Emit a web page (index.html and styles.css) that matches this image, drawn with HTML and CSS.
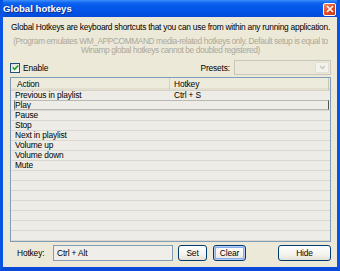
FILE: index.html
```html
<!DOCTYPE html>
<html lang="en">
<head>
  <meta charset="UTF-8">
  <title>Global hotkeys</title>
  <link rel="stylesheet" href="styles.css">
</head>
<body>
<div class="window">
  <div class="titlebar">
    <span class="title">Global hotkeys</span>
    <span class="close-btn">
      <svg width="8" height="8" viewBox="0 0 8 8"><path d="M1 1 L7 7 M7 1 L1 7" stroke="#fff" stroke-width="1.6"/></svg>
    </span>
  </div>

  <div class="content">
    <div class="intro">Global Hotkeys are keyboard shortcuts that you can use from within any running application.</div>
    <div class="note">(Program emulates WM_APPCOMMAND media-related hotkeys only. Default setup is equal to<br>Winamp global hotkeys cannot be doubled registered)</div>

    <div class="options">
      <label class="check">
        <span class="check-box">
          <svg width="7" height="7" viewBox="0 0 7 7"><path d="M0.8 3.4 L2.7 5.3 L6.2 1.5" fill="none" stroke="#21a121" stroke-width="1.6"/></svg>
        </span>
        Enable
      </label>
      <span class="presets-label">Presets:</span>
      <div class="combo">
        <span class="combo-btn">
          <svg width="7" height="5" viewBox="0 0 7 5"><path d="M1 1 L3.5 3.5 L6 1" fill="none" stroke="#c9c7ba" stroke-width="1.3"/></svg>
        </span>
      </div>
    </div>

    <div class="list">
      <div class="list-head">
        <span class="col-action">Action</span>
        <span class="col-key">Hotkey</span>
        <span class="col-rest"></span>
      </div>
      <div class="row"><span class="col-action">Previous in playlist</span><span class="col-key">Ctrl + S</span></div>
      <div class="row focused"><span class="col-action">Play</span><span class="col-key"></span></div>
      <div class="row"><span class="col-action">Pause</span><span class="col-key"></span></div>
      <div class="row"><span class="col-action">Stop</span><span class="col-key"></span></div>
      <div class="row"><span class="col-action">Next in playlist</span><span class="col-key"></span></div>
      <div class="row"><span class="col-action">Volume up</span><span class="col-key"></span></div>
      <div class="row"><span class="col-action">Volume down</span><span class="col-key"></span></div>
      <div class="row"><span class="col-action">Mute</span><span class="col-key"></span></div>
      <div class="row"></div>
      <div class="row"></div>
      <div class="row"></div>
      <div class="row"></div>
      <div class="row"></div>
      <div class="row"></div>
      <div class="row"></div>
    </div>

    <div class="bottom">
      <span class="hotkey-label">Hotkey:</span>
      <div class="hotkey-edit">Ctrl + Alt</div>
      <button class="btn btn-set">Set</button>
      <button class="btn btn-clear default">Clear</button>
      <button class="btn btn-hide">Hide</button>
    </div>
  </div>
</div>
</body>
</html>
```

FILE: styles.css
```css
body {
  margin: 0;
  font-family: 'Liberation Sans', Arial, sans-serif;
  font-size: 8.4px;
  letter-spacing: -0.15px;
  color: #000;
}
.window {
  width: 340px;
  height: 271px;
  box-sizing: border-box;
  background: #ece9d8;
  border-left: 3px solid #0a54e4;
  border-right: 3px solid #0a54e4;
  border-bottom: 4px solid #0a4ad8;
  display: flex;
  flex-direction: column;
  overflow: hidden;
}
.titlebar {
  height: 17px;
  flex: none;
  margin: 0 -3px;
  padding: 0 4px 0 3px;
  display: flex;
  align-items: center;
  justify-content: space-between;
  background: linear-gradient(#3b8ffa 0, #0d62f0 18%, #0357e8 45%, #0152e4 80%, #0648d4 100%);
}
.title {
  color: #fff;
  font-weight: bold;
  font-size: 9.6px;
  letter-spacing: 0;
  text-shadow: 1px 1px 0 #0f2a8c;
}
.close-btn {
  width: 11px;
  height: 11px;
  border: 1px solid #fff;
  border-radius: 2px;
  background: linear-gradient(135deg, #f08b6a, #e0471f 55%, #c73a16);
  display: flex;
  align-items: center;
  justify-content: center;
  margin-top: 1px;
}
.content {
  flex: 1;
  padding: 4px 6px 0 7px;
  display: flex;
  flex-direction: column;
}
.intro {
  text-align: center;
  line-height: 12px;
  white-space: nowrap;
  letter-spacing: -0.25px;
}
.note {
  margin-top: 4px;
  text-align: center;
  line-height: 9px;
  color: #aca899;
  white-space: nowrap;
  letter-spacing: -0.42px;
}
.options {
  margin-top: 5px;
  height: 15px;
  flex: none;
  display: flex;
  align-items: center;
}
.check {
  display: flex;
  align-items: center;
  gap: 3px;
}
.check-box {
  width: 8px;
  height: 8px;
  border: 1px solid #1c5180;
  background: linear-gradient(135deg, #dcdcd7, #fff);
  display: flex;
  align-items: center;
  justify-content: center;
}
.presets-label {
  margin-left: auto;
  margin-right: 4px;
}
.combo {
  width: 97px;
  height: 15px;
  box-sizing: border-box;
  border: 1px solid #c9c7ba;
  background: #ebe8da;
  display: flex;
  justify-content: flex-end;
}
.combo-btn {
  width: 12px;
  margin: 1px;
  border-radius: 1px;
  background: #f3f2ec;
  border: 1px solid #e2e0d4;
  display: flex;
  align-items: center;
  justify-content: center;
}
.list {
  margin-top: 2px;
  height: 165px;
  flex: none;
  box-sizing: border-box;
  border: 1px solid #7f9db9;
  background: #edece6;
  overflow: hidden;
}
.list-head {
  height: 13px;
  box-sizing: border-box;
  display: flex;
  background: #ecebdc;
  border-bottom: 1px solid #d6d3c3;
  box-shadow: inset 0 -2px 0 #e2dfd1;
  line-height: 12px;
}
.list-head .col-action {
  padding-left: 6px;
  border-right: 1px solid #d6d3c3;
}
.list-head .col-key {
  padding-left: 4px;
  border-right: 1px solid #c7c4b5;
}
.col-action {
  width: 159px;
  padding-left: 4px;
  box-sizing: border-box;
}
.col-key {
  width: 159px;
  padding-left: 4px;
  box-sizing: border-box;
}
.row {
  height: 10px;
  box-sizing: border-box;
  display: flex;
  line-height: 9px;
  border-bottom: 1px solid #d9d7cf;
  position: relative;
}
.row.focused::after {
  content: "";
  position: absolute;
  left: 3px;
  right: 1px;
  top: -1px;
  bottom: 0;
  border: 1px solid #b9b8b2;
  border-left-color: #6d6c68;
  border-right-color: #555450;
}
.bottom {
  margin-top: 3px;
  height: 16px;
  flex: none;
  display: flex;
  align-items: center;
}
.hotkey-label {
  margin-left: 7px;
  width: 36px;
}
.hotkey-edit {
  width: 120px;
  height: 16px;
  box-sizing: border-box;
  border: 1px solid #7f9db9;
  background: #efeee9;
  padding-left: 3px;
  line-height: 14px;
}
.btn {
  height: 16px;
  box-sizing: border-box;
  border: 1px solid #003c74;
  border-radius: 3px;
  background: linear-gradient(#ffffff, #f4f3ee 60%, #e3e1d6);
  font-family: inherit;
  font-size: 8.4px;
  letter-spacing: -0.15px;
  padding: 0;
  color: #000;
}
.btn-set {
  width: 29px;
  margin-left: 5px;
}
.btn-clear {
  width: 33px;
  margin-left: 6px;
}
.btn.default {
  box-shadow: inset 0 0 0 1px #b5cbf4, inset 0 0 0 2px #89adec;
}
.btn-hide {
  width: 53px;
  margin-left: auto;
}
```
